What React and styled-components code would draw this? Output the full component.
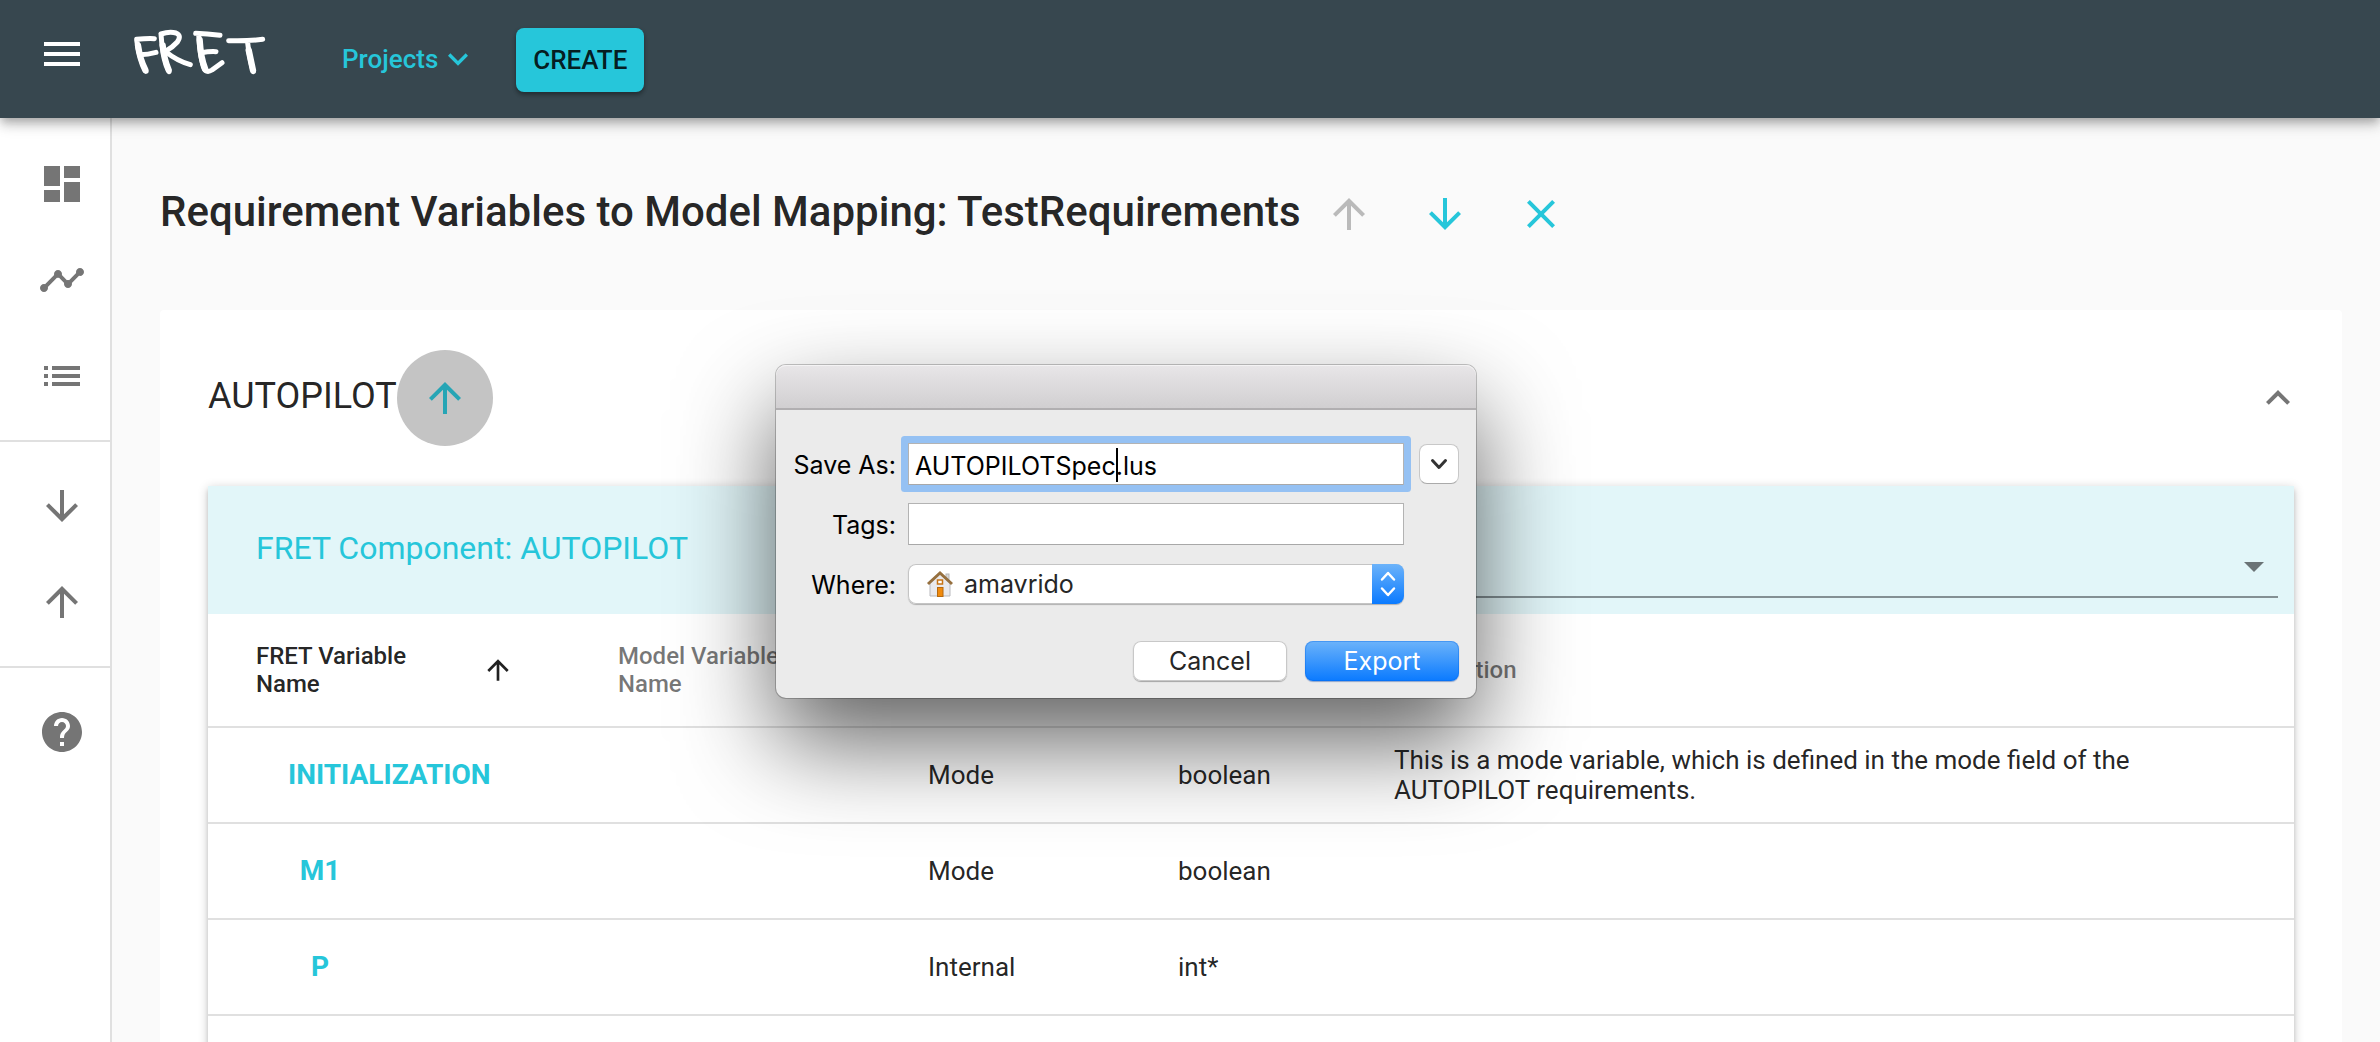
import React from "react";
import styled, { createGlobalStyle, css } from "styled-components";

const cyan = "#26c6da";
const ink = "rgba(0, 0, 0, 0.87)";
const muted = "rgba(0, 0, 0, 0.54)";
const line = "#e0e0e0";
const systemFont = '"Inter", "Liberation Sans", sans-serif';

const GlobalStyle = createGlobalStyle`
  *, *::before, *::after { box-sizing: border-box; }
  body {
    margin: 0;
    background: #fafafa;
    color: ${ink};
    font-family: Roboto, "Liberation Sans", sans-serif;
    -webkit-font-smoothing: antialiased;
  }
  button, input, select { font: inherit; color: inherit; margin: 0; }
`;

const paths = {
  menu: "M3 18h18v-2H3v2zm0-5h18v-2H3v2zm0-7v2h18V6H3z",
  dashboard: "M3 13h8V3H3v10zm0 8h8v-6H3v6zm10 0h8V11h-8v10zm0-18v6h8V3h-8z",
  timeline:
    "M23 8c0 1.1-.9 2-2 2-.18 0-.35-.02-.51-.07l-3.56 3.55c.05.16.07.34.07.52 0 1.1-.9 2-2 2s-2-.9-2-2c0-.18.02-.36.07-.52l-2.55-2.55c-.16.05-.34.07-.52.07s-.36-.02-.52-.07l-4.55 4.56c.05.16.07.33.07.51 0 1.1-.9 2-2 2s-2-.9-2-2 .9-2 2-2c.18 0 .35.02.51.07l4.56-4.55C8.02 9.36 8 9.18 8 9c0-1.1.9-2 2-2s2 .9 2 2c0 .18-.02.36-.07.52l2.55 2.55c.16-.05.34-.07.52-.07s.36.02.52.07l3.55-3.56C19.02 8.35 19 8.18 19 8c0-1.1.9-2 2-2s2 .9 2 2z",
  list: "M3 13h2v-2H3v2zm0 4h2v-2H3v2zm0-8h2V7H3v2zm4 4h14v-2H7v2zm0 4h14v-2H7v2zM7 7v2h14V7H7z",
  down: "M20 12l-1.41-1.41L13 16.17V4h-2v12.17l-5.58-5.59L4 12l8 8 8-8z",
  up: "M4 12l1.41 1.41L11 7.83V20h2V7.83l5.58 5.59L20 12l-8-8-8 8z",
  close:
    "M19 6.41L17.59 5 12 10.59 6.41 5 5 6.41 10.59 12 5 17.59 6.41 19 12 13.41 17.59 19 19 17.59 13.41 12z",
  help: "M12 2C6.48 2 2 6.48 2 12s4.48 10 10 10 10-4.48 10-10S17.52 2 12 2zm1 17h-2v-2h2v2zm2.07-7.75l-.9.92C13.45 12.9 13 13.5 13 15h-2v-.5c0-1.1.45-2.1 1.17-2.83l1.24-1.26c.37-.36.59-.86.59-1.41 0-1.1-.9-2-2-2s-2 .9-2 2H8c0-2.21 1.79-4 4-4s4 1.79 4 4c0 .88-.36 1.68-.93 2.25z",
  collapse: "M12 8l-6 6 1.41 1.41L12 10.83l4.59 4.58L18 14z",
  expand: "M7.41 8.59L12 13.17l4.59-4.58L18 10l-6 6-6-6z",
  caret: "M7 10l5 5 5-5z",
};

const Svg = styled.svg`
  display: block;
  flex: none;
  width: ${(p) => p.$size}px;
  height: ${(p) => p.$size}px;
  fill: currentColor;
`;

function Icon({ name, size = 48 }) {
  return (
    <Svg $size={size} viewBox="0 0 24 24" aria-hidden="true">
      <path d={paths[name]} />
    </Svg>
  );
}

const plainButton = css`
  border: 0;
  padding: 0;
  background: none;
  cursor: pointer;
`;

const Page = styled.div`
  display: flex;
  flex-direction: column;
  height: 100vh;
  overflow: hidden;
`;

/* ---------- top bar ---------- */

const TopBar = styled.header`
  position: relative;
  z-index: 1;
  display: flex;
  align-items: center;
  flex: none;
  height: 118px;
  padding: 0 38px;
  background: #37474f;
  box-shadow: 0 4px 8px -2px rgba(0, 0, 0, 0.2), 0 8px 10px rgba(0, 0, 0, 0.14),
    0 2px 20px rgba(0, 0, 0, 0.12);
`;

const Brand = styled.div`
  display: flex;
  align-items: center;
  gap: 46px;
  padding-bottom: 10px;
  color: #fff;
`;

const MenuButton = styled.button`
  ${plainButton}
`;

const Logo = styled.svg`
  display: block;
  width: 136px;
  height: 48px;
  margin-bottom: 4px;
  fill: none;
  stroke: currentColor;
  stroke-linecap: round;
  stroke-linejoin: round;
`;

const ProjectsButton = styled.button`
  ${plainButton}
  display: flex;
  align-items: center;
  margin: 0 38px 0 74px;
  color: ${cyan};
  font-size: 26px;
  font-weight: 500;
  line-height: 32px;
`;

const CreateButton = styled.button`
  ${plainButton}
  height: 64px;
  width: 128px;
  margin-top: 2px;
  border-radius: 8px;
  background: ${cyan};
  color: ${ink};
  font-size: 26px;
  font-weight: 500;
  box-shadow: 0 2px 4px rgba(0, 0, 0, 0.3), 0 4px 4px rgba(0, 0, 0, 0.12);
`;

/* ---------- side rail ---------- */

const Body = styled.div`
  display: flex;
  flex: 1;
  min-height: 0;
`;

const Rail = styled.nav`
  flex: none;
  width: 112px;
  padding-top: 2px;
  background: #fff;
  border-right: 2px solid ${line};
`;

const RailGroup = styled.div`
  padding: 16px 0;
  & + & {
    border-top: 2px solid ${line};
  }
`;

const RailButton = styled.button`
  ${plainButton}
  display: flex;
  align-items: center;
  width: 100%;
  height: 96px;
  padding-left: 38px;
  color: #757575;
`;

/* ---------- content ---------- */

const Main = styled.main`
  flex: 1;
  min-width: 0;
  padding: 48px 38px 0 48px;
  overflow: hidden;
`;

const TitleRow = styled.div`
  display: flex;
  align-items: center;
  height: 96px;
  margin-bottom: 48px;
`;

const Title = styled.h1`
  margin: 0;
  padding-bottom: 4px;
  font-size: 42px;
  font-weight: 500;
  line-height: 48px;
  white-space: nowrap;
`;

const RoundButton = styled.button`
  ${plainButton}
  display: grid;
  place-items: center;
  flex: none;
  width: 96px;
  height: 96px;
  border-radius: 50%;
  color: ${(p) => p.$color || cyan};
  background: ${(p) => (p.$active ? "#c4c4c4" : "transparent")};
`;

const Panel = styled.section`
  background: #fff;
  border-radius: 4px;
  padding: 0 48px 48px;
`;

const PanelHeader = styled.div`
  display: flex;
  align-items: center;
  height: 176px;
  margin-right: -8px;
`;

const PanelTitle = styled.h2`
  margin: 0;
  padding-bottom: 4px;
  font-size: 36px;
  font-weight: 400;
  line-height: 44px;
`;

const CollapseButton = styled.button`
  ${plainButton}
  margin-left: auto;
  color: #757575;
`;

const Card = styled.div`
  background: #fff;
  box-shadow: 0 2px 10px rgba(0, 0, 0, 0.2), 0 4px 4px rgba(0, 0, 0, 0.14);
`;

const Banner = styled.div`
  display: flex;
  align-items: center;
  justify-content: space-between;
  height: 128px;
  padding: 0 16px 0 48px;
  background: #e2f6f9;
`;

const BannerTitle = styled.h3`
  margin: 0;
  padding-bottom: 4px;
  color: ${cyan};
  font-size: 32px;
  font-weight: 400;
  line-height: 40px;
`;

const ModelField = styled.div`
  display: grid;
  align-items: center;
  align-self: flex-end;
  width: 43%;
  height: 62px;
  margin-bottom: 16px;
  border-bottom: 2px solid #839094;
  color: #6a7376;
  & > * {
    grid-area: 1 / 1;
  }
  & > svg {
    justify-self: end;
    pointer-events: none;
  }
`;

const ModelSelect = styled.select`
  appearance: none;
  width: 100%;
  height: 60px;
  border: 0;
  background: none;
  font-size: 32px;
`;

const Table = styled.table`
  width: 100%;
  table-layout: fixed;
  border-collapse: separate;
  border-spacing: 0;
`;

const Col = styled.col`
  width: ${(p) => p.$width};
`;

const HeadCell = styled.th`
  height: 114px;
  padding: 0 48px 0 0;
  border-bottom: 2px solid ${line};
  color: ${(p) => (p.$sorted ? ink : muted)};
  font-size: 24px;
  font-weight: 500;
  line-height: 28px;
  text-align: left;
  &:first-child {
    padding-left: 48px;
  }
`;

const SortLabel = styled.button`
  ${plainButton}
  display: flex;
  align-items: center;
  justify-content: space-between;
  width: 258px;
  text-align: left;
`;

const HeadText = styled.span`
  display: block;
  max-width: 180px;
`;

const Cell = styled.td`
  height: 96px;
  padding: 0 48px 0 0;
  border-bottom: 2px solid ${line};
  font-size: 26px;
  line-height: 30px;
  &:first-child {
    padding-left: 48px;
  }
`;

const VariableButton = styled.button`
  ${plainButton}
  min-width: 128px;
  height: 72px;
  padding: 0 32px;
  color: ${cyan};
  font-size: 28px;
  font-weight: 700;
`;

/* ---------- save dialog ---------- */

const Dialog = styled.div`
  position: absolute;
  z-index: 2;
  top: 365px;
  left: 776px;
  width: 700px;
  border-radius: 10px;
  background: #ebebeb;
  color: #000;
  font-family: ${systemFont};
  font-size: 25px;
  box-shadow: 0 0 0 1px rgba(0, 0, 0, 0.22), 0 44px 96px rgba(0, 0, 0, 0.62);
`;

const DialogBar = styled.div`
  height: 45px;
  border-radius: 10px 10px 0 0;
  border-bottom: 2px solid #b1afb1;
  background: linear-gradient(#e8e6e8, #d1cfd1);
  box-shadow: inset 0 1px 0 #f4f3f4;
`;

const DialogForm = styled.form`
  display: grid;
  grid-template-columns: 120px 1fr 40px;
  column-gap: 12px;
  row-gap: 18px;
  align-items: center;
  padding: 33px 17px 17px 0;
`;

const DialogLabel = styled.label`
  padding-top: 2px;
  line-height: 36px;
  text-align: right;
  white-space: nowrap;
`;

const FieldSlot = styled.div`
  position: relative;
  display: flex;
  align-items: center;
  height: 42px;
  margin-right: 3px;
`;

const TextField = styled.input`
  width: 100%;
  height: 42px;
  padding: 4px 6px 0;
  border: 1px solid #b3b3b3;
  border-bottom-color: #a8a8a8;
  border-radius: 0;
  outline: none;
  background: #fff;
  ${(p) =>
    p.$focused &&
    css`
      box-shadow: 0 0 0 7px #95c1f3;
      border-radius: 1px;
    `}
`;

const TextCaret = styled.span`
  position: absolute;
  top: 5px;
  left: 208px;
  width: 2px;
  height: 34px;
  background: #000;
`;

const MoreButton = styled.button`
  ${plainButton}
  display: grid;
  place-items: center;
  height: 40px;
  border: 1px solid #c8c8c8;
  border-bottom-color: #aaa;
  border-radius: 8px;
  background: #fff;
  color: #333;
`;

const PopUp = styled.div`
  display: grid;
  grid-template-columns: 24px 1fr 32px;
  align-items: center;
  width: 100%;
  height: 40px;
  border-radius: 8px;
  background: #fff;
  box-shadow: inset 0 0 0 1px #c4c4c4, 0 1px 1px rgba(0, 0, 0, 0.25);
  overflow: hidden;
`;

const PopUpSelect = styled.select`
  grid-area: 1 / 1 / 2 / 4;
  appearance: none;
  width: 100%;
  height: 40px;
  padding: 0 36px 0 56px;
  border: 0;
  background: none;
  color: #262626;
`;

const HouseIcon = styled.svg`
  grid-area: 1 / 1 / 2 / 2;
  width: 28px;
  height: 28px;
  margin-left: 18px;
  pointer-events: none;
`;

const Stepper = styled.span`
  grid-area: 1 / 3 / 2 / 4;
  display: grid;
  place-items: center;
  height: 40px;
  background: linear-gradient(#6cb3fa, #0a7aff);
  pointer-events: none;
`;

const StrokeSvg = styled.svg`
  display: block;
  fill: none;
  stroke: currentColor;
  stroke-linecap: round;
  stroke-linejoin: round;
`;

const DialogActions = styled.div`
  grid-column: 1 / -1;
  display: flex;
  justify-content: flex-end;
  gap: 18px;
  padding-top: 18px;
`;

const DialogButton = styled.button`
  ${plainButton}
  width: 154px;
  height: 40px;
  border-radius: 8px;
  background: ${(p) => (p.$primary ? "linear-gradient(#6cb3fa, #0a7aff)" : "#fff")};
  color: ${(p) => (p.$primary ? "#fff" : "#262626")};
  box-shadow: ${(p) =>
    p.$primary
      ? "inset 0 0 0 1px rgba(0, 100, 230, 0.35), 0 1px 1px rgba(0, 60, 160, 0.4)"
      : "inset 0 0 0 1px #c8c8c8, 0 1px 1px rgba(0, 0, 0, 0.3)"};
`;

const railGroups = [
  [
    ["dashboard", "Dashboard"],
    ["timeline", "Analysis"],
    ["list", "Requirements"],
  ],
  [
    ["down", "Import"],
    ["up", "Export"],
  ],
  [["help", "Help"]],
];

const rows = [
  {
    name: "INITIALIZATION",
    type: "Mode",
    data: "boolean",
    text: "This is a mode variable, which is defined in the mode field of the AUTOPILOT requirements.",
  },
  { name: "M1", type: "Mode", data: "boolean", text: "" },
  { name: "P", type: "Internal", data: "int*", text: "" },
  { name: "", type: "", data: "", text: "" },
];

function SaveDialog() {
  return (
    <Dialog role="dialog" aria-label="Save">
      <DialogBar />
      <DialogForm onSubmit={(e) => e.preventDefault()}>
        <DialogLabel htmlFor="save-as">Save As:</DialogLabel>
        <FieldSlot>
          <TextField id="save-as" type="text" defaultValue="AUTOPILOTSpec.lus" $focused />
          <TextCaret />
        </FieldSlot>
        <MoreButton type="button" aria-label="Show more">
          <StrokeSvg width="18" height="12" viewBox="0 0 18 12" strokeWidth="3">
            <path d="M2.5 2.5L9 9.5L15.5 2.5" />
          </StrokeSvg>
        </MoreButton>

        <DialogLabel htmlFor="tags">Tags:</DialogLabel>
        <FieldSlot>
          <TextField id="tags" type="text" />
        </FieldSlot>
        <span />

        <DialogLabel htmlFor="where">Where:</DialogLabel>
        <FieldSlot>
          <PopUp>
            <PopUpSelect id="where" defaultValue="home">
              <option value="home">amavrido</option>
            </PopUpSelect>
            <HouseIcon viewBox="0 0 28 28" aria-hidden="true">
              <rect x="20" y="4" width="3" height="8" fill="#d9d9d9" stroke="#b5b5b5" />
              <path d="M4 13L14 4L24 13V26H4Z" fill="#e9e9ec" stroke="#b9b9bd" />
              <path d="M2 14L14 3L26 14" fill="none" stroke="#96703f" strokeWidth="3" />
              <rect x="11.5" y="10" width="5" height="4" fill="#fff" stroke="#c87414" strokeWidth="1.5" />
              <rect x="11.5" y="17.5" width="5.5" height="9" fill="#f08a0c" stroke="#b5690f" />
            </HouseIcon>
            <Stepper>
              <StrokeSvg width="16" height="26" viewBox="0 0 16 26" strokeWidth="2.5" color="#fff">
                <path d="M2 8.5L8 2L14 8.5M2 17.5L8 24L14 17.5" />
              </StrokeSvg>
            </Stepper>
          </PopUp>
        </FieldSlot>
        <span />

        <DialogActions>
          <DialogButton type="button">Cancel</DialogButton>
          <DialogButton type="submit" $primary>
            Export
          </DialogButton>
        </DialogActions>
      </DialogForm>
    </Dialog>
  );
}

export default function App() {
  return (
    <Page>
      <GlobalStyle />
      <TopBar>
        <Brand>
          <MenuButton type="button" aria-label="Menu">
            <Icon name="menu" />
          </MenuButton>
          <Logo viewBox="36 24 408 144" role="img" aria-label="FRET">
            <g strokeWidth="15">
              <path d="M50 60Q56 112 78 154M50 58Q80 55 103 56M60 104Q84 104 108 97" />
              <path d="M123 42Q126 104 147 155M123 42Q148 34 168 39Q186 46 172 66Q158 82 136 94Q170 122 211 134" />
              <path d="M227 40Q260 42 300 46M236 44Q240 110 250 140Q257 162 276 150L306 128M244 98Q268 94 288 95" />
              <path d="M326 62Q380 64 428 58M383 68Q388 116 400 155" />
            </g>
            <path
              strokeWidth="19"
              d="M54 76Q60 118 76 150M128 76Q132 118 146 150M239 60Q242 114 256 148M386 90L399 151"
            />
          </Logo>
        </Brand>
        <ProjectsButton type="button">
          Projects
          <Icon name="expand" size={40} />
        </ProjectsButton>
        <CreateButton type="button">CREATE</CreateButton>
      </TopBar>

      <Body>
        <Rail>
          {railGroups.map((group, i) => (
            <RailGroup key={i}>
              {group.map(([icon, label]) => (
                <RailButton key={icon} type="button" aria-label={label}>
                  <Icon name={icon} />
                </RailButton>
              ))}
            </RailGroup>
          ))}
        </Rail>

        <Main>
          <TitleRow>
            <Title>Requirement Variables to Model Mapping: TestRequirements</Title>
            <RoundButton type="button" aria-label="Upload" $color="#bababa">
              <Icon name="up" />
            </RoundButton>
            <RoundButton type="button" aria-label="Download">
              <Icon name="down" />
            </RoundButton>
            <RoundButton type="button" aria-label="Close">
              <Icon name="close" />
            </RoundButton>
          </TitleRow>

          <Panel>
            <PanelHeader>
              <PanelTitle>AUTOPILOT</PanelTitle>
              <RoundButton type="button" aria-label="Export component" $active $color="#26a5b5">
                <Icon name="up" />
              </RoundButton>
              <CollapseButton type="button" aria-label="Collapse">
                <Icon name="collapse" />
              </CollapseButton>
            </PanelHeader>

            <Card>
              <Banner>
                <BannerTitle>FRET Component: AUTOPILOT</BannerTitle>
                <ModelField>
                  <ModelSelect aria-label="Model component" defaultValue="">
                    <option value="" />
                  </ModelSelect>
                  <Icon name="caret" />
                </ModelField>
              </Banner>
              <Table>
                <colgroup>
                  <Col $width="410px" />
                  <Col $width="310px" />
                  <Col $width="250px" />
                  <Col $width="216px" />
                  <Col $width="auto" />
                </colgroup>
                <thead>
                  <tr>
                    <HeadCell scope="col" $sorted aria-sort="ascending">
                      <SortLabel type="button">
                        <HeadText>FRET Variable Name</HeadText>
                        <Icon name="up" size={32} />
                      </SortLabel>
                    </HeadCell>
                    <HeadCell scope="col">
                      <HeadText>Model Variable Name</HeadText>
                    </HeadCell>
                    <HeadCell scope="col" aria-label="Variable Type" />
                    <HeadCell scope="col" aria-label="Data Type" />
                    <HeadCell scope="col">Description</HeadCell>
                  </tr>
                </thead>
                <tbody>
                  {rows.map((row, i) => (
                    <tr key={i}>
                      <Cell>
                        {row.name && <VariableButton type="button">{row.name}</VariableButton>}
                      </Cell>
                      <Cell />
                      <Cell>{row.type}</Cell>
                      <Cell>{row.data}</Cell>
                      <Cell>{row.text}</Cell>
                    </tr>
                  ))}
                </tbody>
              </Table>
            </Card>
          </Panel>
        </Main>
      </Body>

      <SaveDialog />
    </Page>
  );
}
